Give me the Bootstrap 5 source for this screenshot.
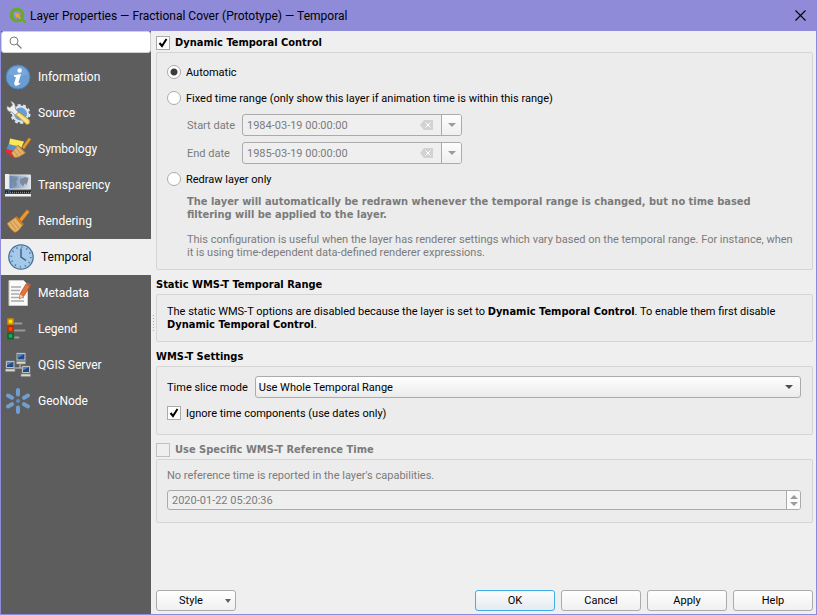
<!DOCTYPE html>
<html lang="en">
<head>
<meta charset="utf-8">
<meta name="viewport" content="width=device-width, initial-scale=1">
<title>Layer Properties — Fractional Cover (Prototype) — Temporal</title>
<link href="https://cdn.jsdelivr.net/npm/bootstrap@5.3.0/dist/css/bootstrap.min.css" rel="stylesheet">
<style>
  body { font-family: Roboto, sans-serif; font-size: 11px; line-height: 13px; color: #000; background: #efefef; }
  b, .fw-bold, .group-head { font-family: "DejaVu Sans Condensed", "DejaVu Sans", sans-serif; font-weight: 700; }
  b { line-height: 1px; }
  .dialog { border: 1px solid #8f8bd8; border-top: 0; }
  .titlebar { height: 31px; background: #8f8bd8; font-size: 12px; line-height: 16px; padding: 0 10px 0 8px; }
  .titlebar button { line-height: 0; }
  .side { width: 150px; background: #5d5d5d; font-size: 12px; }
  .search { height: 22px; background: #fff; border: 1px solid #d0d0d0; border-radius: 3px; padding-left: 7px; margin-bottom: 6px; }
  .search input { font-size: 12px; outline: 0; min-width: 0; }
  .side a { height: 36px; color: #fff; gap: 7px; padding-left: 4px; line-height: 16px; }
  .side a.current { background: #efefef; color: #000; padding-left: 7px; }
  .side a svg { width: 26px; height: 26px; flex: none; }
  .splitter { flex: none; width: 5px; }
  .splitter i { width: 1px; height: 1px; background: #aaa; margin: 1px; }
  .pane { padding: 2px 3px 3px 0; min-width: 0; }
  .group-head { height: 19px; gap: 5px; }
  .group-head h2 { font-size: 11px; line-height: 13px; font-weight: 700; margin: 0; }
  .group-box { background: #ececec; border: 1px solid #d5d5d5; border-radius: 2px; padding: 10px 11px 10px 10px; }
  .group-box.fields { padding-top: 9px; padding-bottom: 12px; }
  .groups { gap: 5px; }
  .tick { appearance: none; width: 14px; height: 14px; margin: 0; flex: none; border: 1px solid #ababab; background: #fff center no-repeat; }
  .tick[type=radio] { border-radius: 50%; }
  .tick[type=radio]:checked { background-image: radial-gradient(circle, #3c3c3c 3px, transparent 4px); }
  .tick[type=checkbox]:checked { background-image: url("data:image/svg+xml,%3Csvg xmlns='http://www.w3.org/2000/svg' viewBox='0 0 12 12'%3E%3Cpath d='M2.5 6 5 9 9.5 2' fill='none' stroke='%23000' stroke-width='2'/%3E%3C/svg%3E"); }
  .tick:disabled { background-color: #efefef; border-color: #c0c0c0; }
  .choice { height: 18px; gap: 5px; }
  .faded { color: #7b7b7b; }
  .indent { padding-left: 20px; }
  .dates { gap: 6px; margin: 7px 0 6px; }
  .dates label { width: 55px; }
  .note { padding-top: 7px; }
  .field { height: 22px; border: 1px solid #ababab; border-radius: 3px; background: #efefef; overflow: hidden; }
  .date-field { width: 220px; }
  .field input { font-size: 11px; color: #7b7b7b; padding: 0 4px; min-width: 0; }
  .drop { width: 20px; border-left: 1px solid #ababab; background: linear-gradient(#fdfdfd, #efefef); }
  .spin { width: 14px; border-left: 1px solid #ababab; background: #fbfbfb; gap: 3px; }
  .spin-field { height: 20px; }
  .spin button { line-height: 0; }
  .slice-row { gap: 7px; margin-bottom: 6px; }
  .pick { height: 22px; appearance: none; border: 1px solid #ababab; border-radius: 3px; font-size: 11px; padding: 0 24px 0 3px; color: #000; background: url("data:image/svg+xml,%3Csvg xmlns='http://www.w3.org/2000/svg' width='8' height='4'%3E%3Cpath d='M0 0h8L4 4z' fill='%23505050'/%3E%3C/svg%3E") right 7px center no-repeat, linear-gradient(#fefefe, #ebebeb); }
  .actions { gap: 6px; }
  .push { width: 80px; height: 21px; font-size: 11px; line-height: 13px; padding: 0; color: #000; border: 1px solid #ababab; border-radius: 3px; background: linear-gradient(#fefefe, #f0f0f0); }
  .push.main { border-color: #3daee9; background: linear-gradient(#fbfcfd, #e4eaf0); }
</style>
</head>
<body>
<div class="dialog d-flex flex-column min-vh-100">
  <header class="titlebar d-flex align-items-center">
    <svg width="17" height="17" viewBox="0 0 17 17" aria-hidden="true">
      <circle cx="8" cy="8" r="5.700" fill="none" stroke="#69a832" stroke-width="3.600"/>
      <path d="M9 9l2.500-1 5.500 6.500V16h-2z" fill="#69a832"/>
      <path d="M5.500 5.500l6 2-1.500 1 2 2.500-1.500 1-2-2.500-1 1.500z" fill="#f0a23a"/>
    </svg>
    <span class="ms-1 flex-grow-1">Layer Properties — Fractional Cover (Prototype) — Temporal</span>
    <button type="button" class="border-0 bg-transparent p-0" aria-label="Close"><svg width="11" height="11" viewBox="0 0 11 11"><path d="M.5.5l10 10M10.500.5l-10 10" stroke="#000" stroke-width="1.100"/></svg></button>
  </header>
  <div class="d-flex flex-grow-1">
    <nav class="side flex-shrink-0" aria-label="Sections">
      <div class="search d-flex align-items-center">
        <svg class="flex-shrink-0" width="13" height="13" viewBox="0 0 13 13" aria-hidden="true"><circle cx="5" cy="5" r="4" fill="none" stroke="#7d7d7d"/><path d="M8 8l4.500 4.500" stroke="#7d7d7d" stroke-width="1.300"/></svg>
        <input type="search" class="border-0 bg-transparent flex-grow-1" aria-label="Search">
      </div>
      <a href="#" class="d-flex align-items-center text-decoration-none">
        <svg viewBox="0 0 26 26"><circle cx="13" cy="13" r="12" fill="#6a9dd4" stroke="#4c80b8"/><path d="M3 10a10.500 10.500 0 0 1 20 0q-10 5-20 0" fill="#85b0df" opacity=".5"/><circle cx="14.600" cy="6.500" r="2.200" fill="#fff"/><path d="M9 11.300l7-1.300-2.500 8.300q-.3 1.500 2.500.2-2 3.300-4.800 3.300-2.500-.3-1.800-3.300l1.500-5q0-1-1.900-.8z" fill="#fff"/></svg>
        Information</a>
      <a href="#" class="d-flex align-items-center text-decoration-none">
        <svg viewBox="0 0 26 26"><circle cx="15.500" cy="14" r="7.500" fill="#6a9dd4" stroke="#dce6f0" stroke-width="2"/><circle cx="15.500" cy="14" r="9" fill="none" stroke="#dce6f0" stroke-width="2" stroke-dasharray="3 2.600"/><path d="M2 6q-1 6 5 6l5 5 3-3-4.500-5Q11 2.500 5.500 1l2 4-2.500 2.500z" fill="#eee" stroke="#777" stroke-width=".6"/><path d="M10.500 14.500l3.500-2.500 10.500 8q1.500 4.500-3 4.500z" fill="#f0d878" stroke="#a98528" stroke-width=".8"/><path d="M12.500 14l10.500 8.500" stroke="#fff3b0"/></svg>
        Source</a>
      <a href="#" class="d-flex align-items-center text-decoration-none">
        <svg viewBox="0 0 26 26"><path d="M5 2.500l14 3-3 7-12-4z" fill="#fce94f"/><path d="M3.500 8l13 3-3 6-12-4z" fill="#5b91cb"/><path d="M1 13l12 3-2 6q-5-1-10-6z" fill="#ee2b2b"/><path d="M17 11l7-9.500 2 2-7 10z" fill="#e79a32" stroke="#a86215" stroke-width=".5"/><path d="M13 9l7.500 8-7 4-4 .5-3-4.500z" fill="#e6b26a" stroke="#b27631" stroke-width=".7"/><path d="M13.500 10l6 7M11 12l5 6M9 15l4 5" stroke="#b78442" stroke-width=".7"/></svg>
        Symbology</a>
      <a href="#" class="d-flex align-items-center text-decoration-none">
        <svg viewBox="0 0 26 26"><defs><linearGradient id="sea"><stop stop-color="#5c82b4"/><stop offset="1" stop-color="#dfe4ea"/></linearGradient></defs><path d="M0 2h4v15H0z" fill="#eee"/><path d="M4 3h21.500v14H4z" fill="url(#sea)" stroke="#e5e5e5"/><path d="M6 6l6-1 1 2.500-3 2 2 2.500-2 3-2-4.500zM15 7l5-2 3.500 1-1 4-1.500 3.500-1-2.500-2 3.500-3-3.500z" fill="#7c8a9c"/><path d="M0 22h26v2.500H0z" fill="#f1f1f1"/><path d="M0 20h26" stroke="#222" stroke-width="3"/><path d="M1 20.500h25" stroke="#ccc" stroke-width="1.500" stroke-dasharray=".6 1.400"/><path d="M3 18h1.500v4H3z" fill="#1c6abe"/></svg>
        Transparency</a>
      <a href="#" class="d-flex align-items-center text-decoration-none">
        <svg viewBox="0 0 26 26"><path d="M14 11l8-9.500 2.500 2.500-8 10z" fill="#e79a32" stroke="#a86215" stroke-width=".6"/><path d="M11 9l7 8-5 6-3 1.500q-5-3-8-9l4-3z" fill="#e6b26a" stroke="#a9702c" stroke-width=".8"/><path d="M11 10l6 7M8 13l6 7M5 14l6 8" stroke="#bb8843" stroke-width=".8"/><path d="M11 9l7 8" stroke="#d17c1d" stroke-width="2"/></svg>
        Rendering</a>
      <a href="#" class="current d-flex align-items-center text-decoration-none" aria-current="page">
        <svg viewBox="0 0 26 26"><circle cx="13" cy="13" r="12.200" fill="#a5c9e9" stroke="#4a7296" stroke-width="1.300"/><circle cx="13" cy="13" r="9.800" fill="none" stroke="#4c7fae" stroke-width="1.800" stroke-dasharray="1.200 3.931"/><path d="M13 4.500V13l5 3.500" fill="none" stroke="#42658a" stroke-width="1.500"/></svg>
        Temporal</a>
      <a href="#" class="d-flex align-items-center text-decoration-none">
        <svg viewBox="0 0 26 26"><path d="M4 .5h14.500l4 4V25.500H4z" fill="#fbfbfb" stroke="#ccc"/><path d="M6 7h10M6 10.500h9M6 14h8M6 17.500h13M6 21h13" stroke="#aaa" stroke-width="1.300"/><path d="M21 4l4 2.500-6.500 10-4 2.500.5-5z" fill="#e8733a" stroke="#ad4b1c" stroke-width=".7"/><path d="M21 4l1-1.500 4 2-1 2z" fill="#ad625d"/><path d="M15 14.500l3.500 2-4 2.500z" fill="#edd2a9"/></svg>
        Metadata</a>
      <a href="#" class="d-flex align-items-center text-decoration-none">
        <svg viewBox="0 0 26 26"><path d="M3 3h5v5H3z" fill="#fd0" stroke="#d98a00" stroke-width="1.500"/><path d="M3 10.500h5v5H3z" fill="#fb4a0b" stroke="#b82d00" stroke-width="1.500"/><path d="M3 17.500h5v5H3z" fill="#13b44d" stroke="#08642a" stroke-width="1.500"/><path d="M10 7.500h6.500M10 14.500h9.500M10 21.500h3.500" stroke="#999" stroke-width="2" stroke-linecap="round"/></svg>
        Legend</a>
      <a href="#" class="d-flex align-items-center text-decoration-none">
        <svg viewBox="0 0 26 26"><path d="M15 10v6M8 16h10" stroke="#ccc"/><g fill="#d5d7d2" stroke="#888b86" stroke-width=".6"><path d="M11.500 1h9v7.500h-9zM1 9h8.500v7H1zM17 14h8v7h-8z"/><path d="M11.500 9.500h9V12h-9zM.5 17H10v2.500H.5zM16 22h9.500v2.500H16z"/></g><path d="M12.500 2h7v5.500h-7zM2 10h6.500v5H2zM18 15h6v5h-6z" fill="#204a87"/><path d="M12.500 2h7l-7 4zM2 10h6.500L2 13.500zM18 15h6l-6 3.500z" fill="#5583bd"/></svg>
        QGIS Server</a>
      <a href="#" class="d-flex align-items-center text-decoration-none">
        <svg viewBox="0 0 26 26"><g stroke="#6f9fd0" stroke-width="4" stroke-linecap="round"><path d="M13 2v4.500M13 19.500V24M3 7.500l4 2.300M19 16.200l4 2.300M3 18.500l4-2.300M19 9.800l4-2.300"/></g><circle cx="13" cy="13" r="2" fill="#5e8dbf"/></svg>
        GeoNode</a>
    </nav>
    <div class="splitter d-flex flex-column justify-content-center align-items-center" aria-hidden="true"><i></i><i></i><i></i><i></i><i></i><i></i></div>
    <main class="pane d-flex flex-column flex-grow-1">
      <form class="groups d-flex flex-column">
        <section>
          <div class="group-head d-flex align-items-center"><input class="tick" type="checkbox" id="dyn" checked><label for="dyn">Dynamic Temporal Control</label></div>
          <div class="group-box">
            <div class="choice d-flex align-items-center mb-2"><input class="tick" type="radio" name="mode" id="auto" checked><label for="auto">Automatic</label></div>
            <div class="choice d-flex align-items-center"><input class="tick" type="radio" name="mode" id="fixed"><label for="fixed">Fixed time range (only show this layer if animation time is within this range)</label></div>
            <div class="dates indent faded d-flex flex-column">
              <div class="d-flex align-items-center"><label for="start">Start date</label>
                <div class="field date-field d-flex"><input class="border-0 bg-transparent flex-grow-1" id="start" value="1984-03-19 00:00:00" disabled>
                  <svg class="align-self-center me-2" width="13" height="10" viewBox="0 0 13 10" aria-hidden="true"><path d="M4 0h9v10H4L0 5z" fill="#d2d2d2"/><path d="M5.500 2.500l5 5m0-5l-5 5" stroke="#fff"/></svg>
                  <button type="button" class="drop border-top-0 border-bottom-0 border-end-0 p-0" aria-label="Choose start date" disabled><svg class="d-block mx-auto" width="8" height="4"><path d="M0 0h8L4 4z" fill="#9c9c9c"/></svg></button></div></div>
              <div class="d-flex align-items-center"><label for="end">End date</label>
                <div class="field date-field d-flex"><input class="border-0 bg-transparent flex-grow-1" id="end" value="1985-03-19 00:00:00" disabled>
                  <svg class="align-self-center me-2" width="13" height="10" viewBox="0 0 13 10" aria-hidden="true"><path d="M4 0h9v10H4L0 5z" fill="#d2d2d2"/><path d="M5.500 2.500l5 5m0-5l-5 5" stroke="#fff"/></svg>
                  <button type="button" class="drop border-top-0 border-bottom-0 border-end-0 p-0" aria-label="Choose end date" disabled><svg class="d-block mx-auto" width="8" height="4"><path d="M0 0h8L4 4z" fill="#9c9c9c"/></svg></button></div></div>
            </div>
            <div class="choice d-flex align-items-center"><input class="tick" type="radio" name="mode" id="redraw"><label for="redraw">Redraw layer only</label></div>
            <div class="indent note faded">
              <p class="fw-bold mb-2 pb-1">The layer will automatically be redrawn whenever the temporal range is changed, but no time based<br>filtering will be applied to the layer.</p>
              <p class="mb-0">This configuration is useful when the layer has renderer settings which vary based on the temporal range. For instance, when it is using time-dependent data-defined renderer expressions.</p>
            </div>
          </div>
        </section>
        <section>
          <div class="group-head d-flex align-items-center"><h2>Static WMS-T Temporal Range</h2></div>
          <div class="group-box"><p class="mb-0">The static WMS-T options are disabled because the layer is set to <b>Dynamic Temporal Control</b>. To enable them first disable <b>Dynamic Temporal Control</b>.</p></div>
        </section>
        <section>
          <div class="group-head d-flex align-items-center"><h2>WMS-T Settings</h2></div>
          <div class="group-box fields">
            <div class="slice-row d-flex align-items-center"><label for="slice" class="flex-shrink-0">Time slice mode</label><select id="slice" class="pick flex-grow-1"><option>Use Whole Temporal Range</option></select></div>
            <div class="choice d-flex align-items-center"><input class="tick" type="checkbox" id="ignore" checked><label for="ignore">Ignore time components (use dates only)</label></div>
          </div>
        </section>
        <section>
          <div class="group-head faded d-flex align-items-center"><input class="tick" type="checkbox" id="ref" disabled><label for="ref">Use Specific WMS-T Reference Time</label></div>
          <div class="group-box fields faded">
            <label for="reftime" class="d-block mb-2">No reference time is reported in the layer's capabilities.</label>
            <div class="field spin-field d-flex"><input class="border-0 bg-transparent flex-grow-1" id="reftime" value="2020-01-22 05:20:36" disabled>
              <div class="spin d-flex flex-column justify-content-center align-items-center">
                <button type="button" class="border-0 bg-transparent p-0" aria-label="Increase" disabled><svg width="8" height="4"><path d="M0 4h8L4 0z" fill="#9c9c9c"/></svg></button>
                <button type="button" class="border-0 bg-transparent p-0" aria-label="Decrease" disabled><svg width="8" height="4"><path d="M0 0h8L4 4z" fill="#9c9c9c"/></svg></button>
              </div></div>
          </div>
        </section>
      </form>
      <footer class="d-flex mt-auto">
        <button type="button" class="push me-auto d-flex align-items-center"><span class="flex-grow-1">Style</span><svg class="me-1" width="6" height="4"><path d="M0 0h6L3 4z" fill="#606060"/></svg></button>
        <div class="d-flex actions"><button type="button" class="push main">OK</button><button type="button" class="push">Cancel</button><button type="button" class="push">Apply</button><button type="button" class="push">Help</button></div>
      </footer>
    </main>
  </div>
</div>
<script src="https://cdn.jsdelivr.net/npm/bootstrap@5.3.0/dist/js/bootstrap.bundle.min.js"></script>
</body>
</html>
